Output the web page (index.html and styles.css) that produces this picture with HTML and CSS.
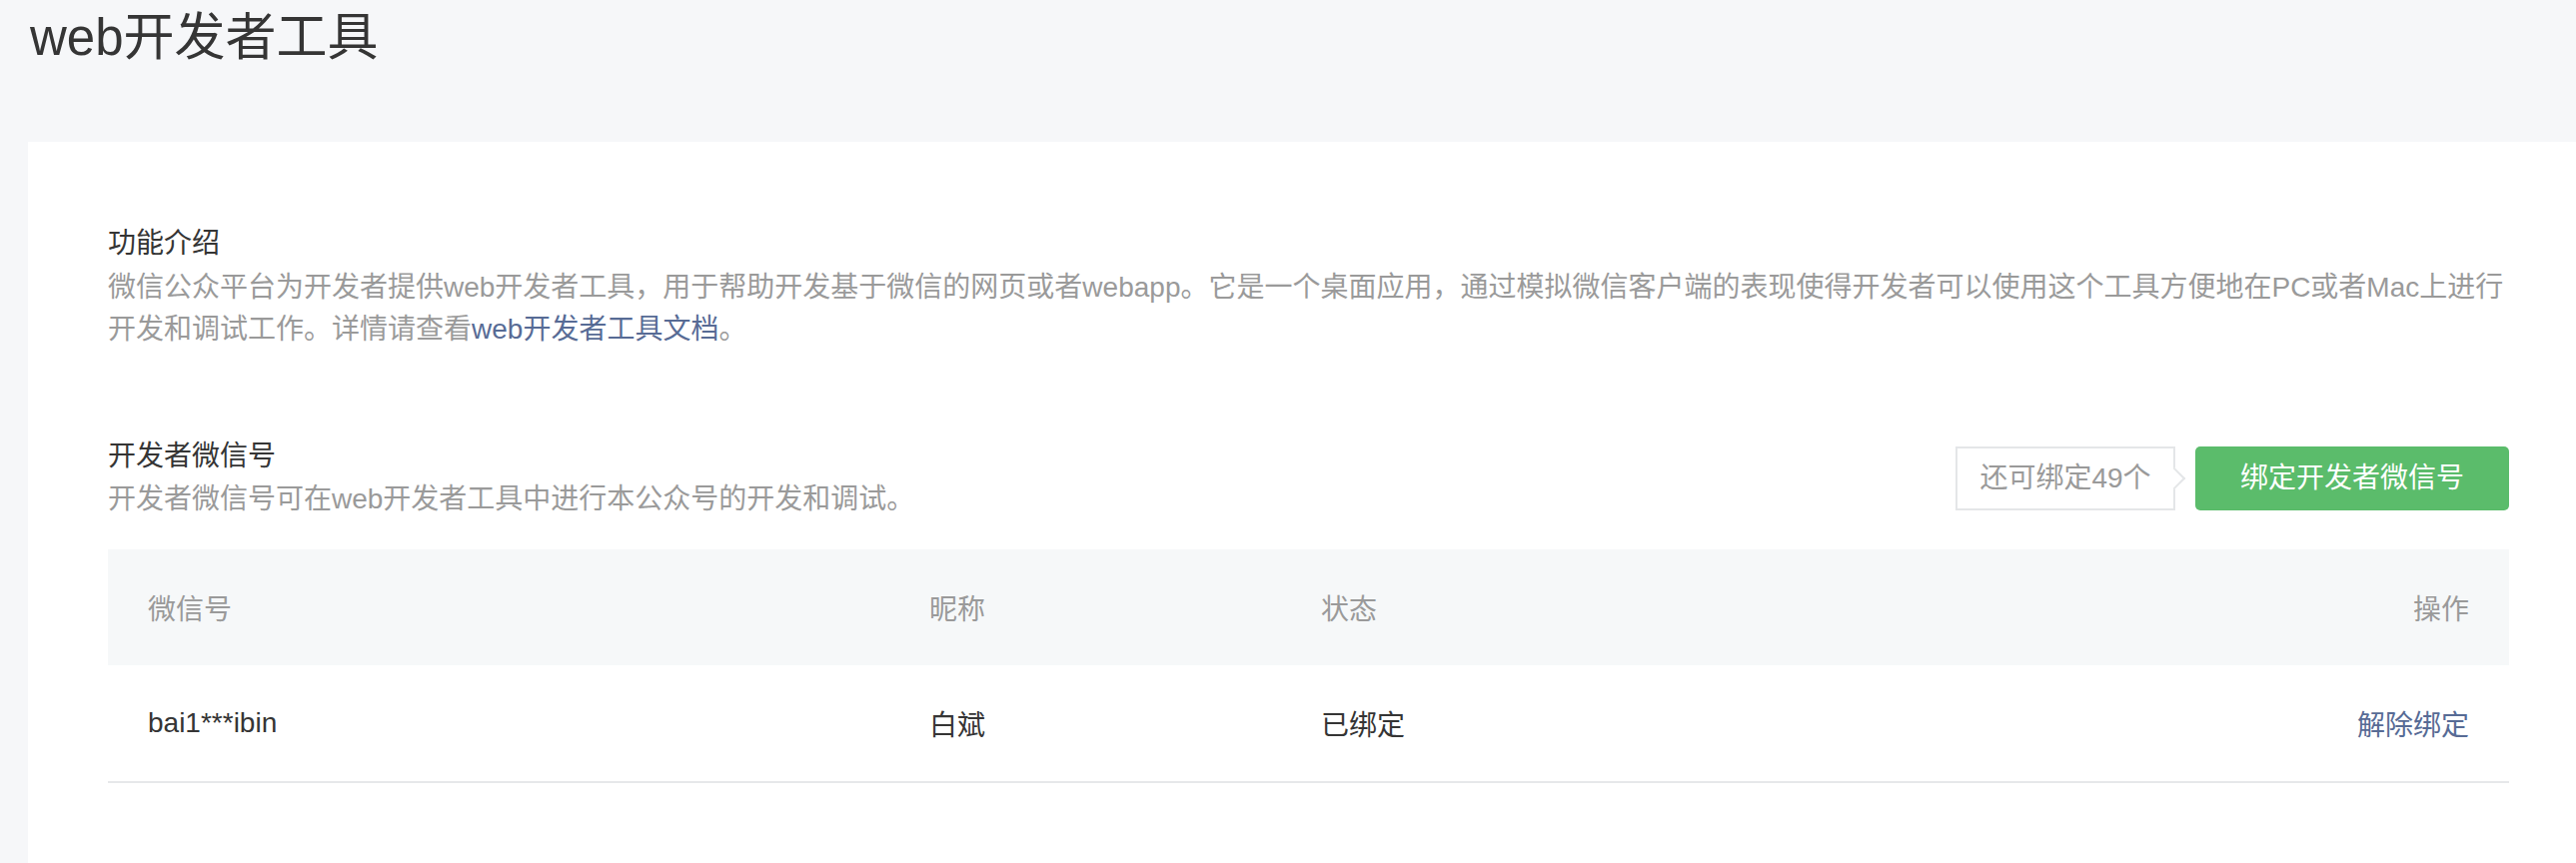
FILE: index.html
```html
<!DOCTYPE html>
<html lang="zh-CN">
<head>
<meta charset="utf-8">
<title>web开发者工具</title>
<link rel="stylesheet" href="styles.css">
</head>
<body>
<div class="page">
  <h1 class="page-title">web开发者工具</h1>
  <div class="card">
    <section class="intro">
      <h2 class="section-title">功能介绍</h2>
      <p class="section-desc intro-desc">微信公众平台为开发者提供web开发者工具，用于帮助开发基于微信的网页或者webapp。它是一个桌面应用，通过模拟微信客户端的表现使得开发者可以使用这个工具方便地在PC或者Mac上进行开发和调试工作。详情请查看<a class="link" href="#">web开发者工具文档</a>。</p>
    </section>
    <section class="devs">
      <div class="devs-head">
        <div class="devs-info">
          <h2 class="section-title">开发者微信号</h2>
          <p class="section-desc">开发者微信号可在web开发者工具中进行本公众号的开发和调试。</p>
        </div>
        <div class="devs-actions">
          <div class="quota">还可绑定49个</div>
          <a class="btn-green" href="#">绑定开发者微信号</a>
        </div>
      </div>
      <table class="dev-table">
        <colgroup>
          <col class="c-id">
          <col class="c-name">
          <col class="c-status">
          <col class="c-op">
        </colgroup>
        <thead>
          <tr><th>微信号</th><th>昵称</th><th>状态</th><th class="op">操作</th></tr>
        </thead>
        <tbody>
          <tr><td>bai1***ibin</td><td>白斌</td><td>已绑定</td><td class="op"><a class="link" href="#">解除绑定</a></td></tr>
        </tbody>
      </table>
    </section>
  </div>
</div>
</body>
</html>
```
FILE: styles.css
```css
html, body {
  margin: 0;
  padding: 0;
}
body {
  background: #f6f7f9;
  font-family: "Liberation Sans", "Noto Sans CJK SC", sans-serif;
  color: #353535;
  overflow: hidden;
  width: 2578px;
  height: 864px;
}
.page {
  padding: 8px 0 0 28px;
}
.page-title {
  margin: 0 0 74px 2px;
  font-size: 51px;
  font-weight: normal;
  line-height: 60px;
  color: #353535;
}
.card {
  background: #fff;
  width: 2403px;
  padding: 83px 80px 80px 80px;
  min-height: 700px;
}
.section-title {
  margin: 0;
  font-size: 28px;
  font-weight: normal;
  line-height: 38px;
  color: #353535;
}
.section-desc {
  margin: 5px 0 0 0;
  font-size: 28px;
  line-height: 38px;
  color: #9a9a9a;
}
.intro-desc {
  margin-top: 4px;
  line-height: 42px;
}
.link {
  color: #576b95;
  text-decoration: none;
}
.devs {
  margin-top: 87px;
}
.devs-head {
  display: flex;
  align-items: center;
  justify-content: space-between;
}
.devs-actions {
  display: flex;
  align-items: center;
  gap: 20px;
}
.quota {
  position: relative;
  box-sizing: border-box;
  width: 220px;
  height: 64px;
  border: 2px solid #e4e6e8;
  background: #fff;
  font-size: 28px;
  line-height: 60px;
  text-align: center;
  color: #9a9a9a;
}
.quota::after {
  content: "";
  position: absolute;
  right: -9px;
  top: 50%;
  width: 14px;
  height: 14px;
  margin-top: -8px;
  background: #fff;
  border-top: 2px solid #e4e6e8;
  border-right: 2px solid #e4e6e8;
  transform: rotate(45deg);
}
.btn-green {
  display: block;
  box-sizing: border-box;
  width: 314px;
  height: 64px;
  border-radius: 5px;
  background: #5bbc6b;
  color: #fff;
  font-size: 28px;
  line-height: 64px;
  text-align: center;
  text-decoration: none;
}
.dev-table {
  margin-top: 31px;
  width: 2403px;
  border-collapse: collapse;
  table-layout: fixed;
  font-size: 28px;
}
.c-id { width: 782px; }
.c-name { width: 392px; }
.c-status { width: 800px; }
.dev-table th {
  height: 116px;
  padding: 0 40px;
  background: #f6f8f9;
  font-weight: normal;
  color: #9a9a9a;
  text-align: left;
}
.dev-table td {
  height: 116px;
  padding: 0 40px;
  border-bottom: 2px solid #e6e8ea;
  color: #353535;
}
.dev-table .op {
  text-align: right;
}
```
